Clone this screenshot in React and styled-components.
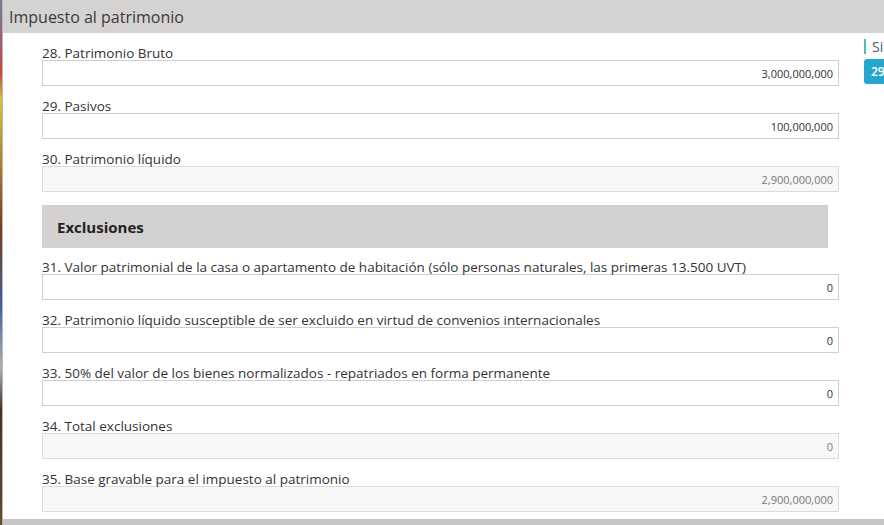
import React from 'react';
import styled, { createGlobalStyle } from 'styled-components';

const GlobalStyle = createGlobalStyle`
  html, body {
    margin: 0;
    padding: 0;
    background: #ffffff;
    overflow: hidden;
  }
  body {
    font-family: "Open Sans", "Liberation Sans", sans-serif;
    color: #333333;
  }
`;

const Page = styled.div`
  display: flex;
  width: 884px;
  height: 525px;
  overflow: hidden;
`;

const BackStrip = styled.div`
  width: 2px;
  flex-shrink: 0;
  background: linear-gradient(
    to bottom,
    #6a7fa0 0%,
    #c9473c 14%,
    #d7c23a 19%,
    #7a3b1c 44%,
    #3c5fa8 58%,
    #b0b0b0 70%,
    #4a3025 78%,
    #6b4a2a 100%
  );
  border-right: 1px solid #b8b8b8;
`;

const Modal = styled.div`
  flex: 1;
  display: flex;
  flex-direction: column;
  background: #ffffff;
`;

const Header = styled.div`
  height: 33px;
  flex-shrink: 0;
  background: #d4d3d1;
  display: flex;
  align-items: center;
  padding-left: 6px;
  font-size: 16px;
  color: #3a3a3a;
`;

const Body = styled.div`
  flex: 1;
  display: flex;
  padding-top: 13px;
  overflow: hidden;
`;

const Form = styled.div`
  width: 797px;
  margin-left: 39px;
  flex-shrink: 0;
`;

const Field = styled.div`
  margin-bottom: 13px;
`;

const Label = styled.div`
  font-size: 13.5px;
  line-height: 14px;
  color: #333333;
  white-space: nowrap;
`;

const Input = styled.div`
  height: 26px;
  box-sizing: border-box;
  border: 1px solid ${p => (p.$readOnly ? '#dcdcdc' : '#d0d0d0')};
  background: ${p => (p.$readOnly ? '#f7f7f7' : '#ffffff')};
  display: flex;
  align-items: center;
  justify-content: flex-end;
  padding-right: 5px;
  font-size: 11px;
  color: ${p => (p.$readOnly ? '#7a7a7a' : '#333333')};
`;

const SectionTitle = styled.div`
  width: 786px;
  height: 43px;
  box-sizing: border-box;
  margin: 1px 0 12px;
  background: #d3d2d0;
  display: flex;
  align-items: center;
  padding-left: 15px;
  font-size: 15px;
  font-weight: 700;
  color: #222222;
`;

const Side = styled.div`
  margin-left: 25px;
  margin-top: -7px;
  display: flex;
  flex-direction: column;
  gap: 5px;
  overflow: hidden;
`;

const SideTitle = styled.div`
  border-left: 2px solid #4cc0b8;
  padding-left: 6px;
  font-size: 14px;
  line-height: 15px;
  color: #555555;
  white-space: nowrap;
`;

const Badge = styled.div`
  width: 40px;
  height: 25px;
  border-radius: 3px;
  background: #26a5cf;
  color: #ffffff;
  font-size: 12px;
  font-weight: 600;
  display: flex;
  align-items: center;
  padding-left: 7px;
`;

const BottomBar = styled.div`
  height: 6px;
  flex-shrink: 0;
  background: #c6c6c6;
`;

const topFields = [
  { label: '28. Patrimonio Bruto', value: '3,000,000,000' },
  { label: '29. Pasivos', value: '100,000,000' },
  { label: '30. Patrimonio líquido', value: '2,900,000,000', readOnly: true },
];

const exclusionFields = [
  {
    label:
      '31. Valor patrimonial de la casa o apartamento de habitación (sólo personas naturales, las primeras 13.500 UVT)',
    value: '0',
  },
  {
    label:
      '32. Patrimonio líquido susceptible de ser excluido en virtud de convenios internacionales',
    value: '0',
  },
  {
    label: '33. 50% del valor de los bienes normalizados - repatriados en forma permanente',
    value: '0',
  },
  { label: '34. Total exclusiones', value: '0', readOnly: true },
  {
    label: '35. Base gravable para el impuesto al patrimonio',
    value: '2,900,000,000',
    readOnly: true,
  },
];

const FormField = ({ label, value, readOnly }) => (
  <Field>
    <Label>{label}</Label>
    <Input $readOnly={readOnly}>{value}</Input>
  </Field>
);

const App = () => {
  return (
    <>
      <GlobalStyle />
      <Page>
        <BackStrip />
        <Modal>
          <Header>Impuesto al patrimonio</Header>
          <Body>
            <Form>
              {topFields.map(f => (
                <FormField key={f.label} {...f} />
              ))}
              <SectionTitle>Exclusiones</SectionTitle>
              {exclusionFields.map(f => (
                <FormField key={f.label} {...f} />
              ))}
            </Form>
            <Side>
              <SideTitle>Simulador</SideTitle>
              <Badge>29</Badge>
            </Side>
          </Body>
          <BottomBar />
        </Modal>
      </Page>
    </>
  );
};

export default App;
